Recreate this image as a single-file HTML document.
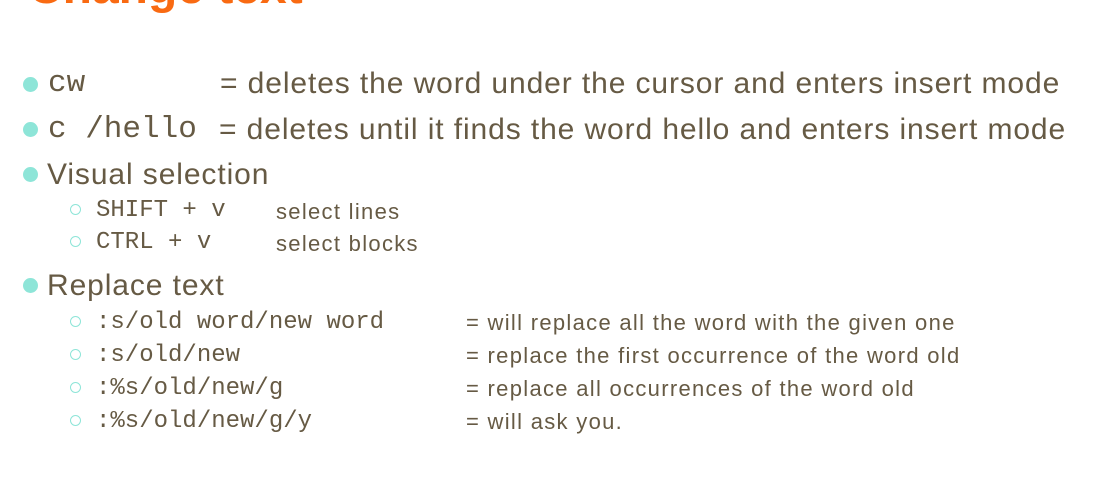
<!DOCTYPE html>
<html><head><meta charset="utf-8"><style>
body{margin:0;width:1097px;height:483px;background:#fff;overflow:hidden;position:relative;font-family:"Liberation Sans",sans-serif;color:#665a44}
div{position:absolute;line-height:1;white-space:pre}
.m{font-family:"Liberation Mono",monospace}
.b{width:15px;height:15px;border-radius:50%;background:#8ee5d8}
.c{width:9px;height:9px;border-radius:50%;border:1.5px solid #8ee5d8}
.t{font-size:30px;letter-spacing:0.9px}
.s{font-size:22px;letter-spacing:1.3px}
.ms{font-size:24px}
</style></head><body>
<div style="left:28px;top:-36px;font-size:48px;font-weight:bold;color:#f96a12">Change text</div>

<div class="b" style="left:23px;top:77px"></div>
<div class="m" style="left:48px;top:68px;font-size:31px">cw</div>
<div class="t" style="left:220px;top:69px">= deletes the word under the cursor and enters insert mode</div>

<div class="b" style="left:23px;top:122px"></div>
<div class="m" style="left:48px;top:114px;font-size:31px">c /hello</div>
<div class="t" style="left:219px;top:115px">= deletes until it finds the word hello and enters insert mode</div>

<div class="b" style="left:23px;top:167px"></div>
<div class="t" style="left:47px;top:160px">Visual selection</div>

<div class="c" style="left:70px;top:204px"></div>
<div class="m ms" style="left:96px;top:199px">SHIFT + v</div>
<div class="s" style="left:276px;top:201px">select lines</div>
<div class="c" style="left:70px;top:236px"></div>
<div class="m ms" style="left:96px;top:231px">CTRL + v</div>
<div class="s" style="left:276px;top:233px">select blocks</div>

<div class="b" style="left:23px;top:278px"></div>
<div class="t" style="left:47px;top:271px">Replace text</div>

<div class="c" style="left:70px;top:316px"></div>
<div class="m ms" style="left:96px;top:311px">:s/old word/new word</div>
<div class="s" style="left:466px;top:312px">= will replace all the word with the given one</div>
<div class="c" style="left:70px;top:349px"></div>
<div class="m ms" style="left:96px;top:344px">:s/old/new</div>
<div class="s" style="left:466px;top:345px">= replace the first occurrence of the word old</div>
<div class="c" style="left:70px;top:382px"></div>
<div class="m ms" style="left:96px;top:377px">:%s/old/new/g</div>
<div class="s" style="left:466px;top:378px">= replace all occurrences of the word old</div>
<div class="c" style="left:70px;top:415px"></div>
<div class="m ms" style="left:96px;top:410px">:%s/old/new/g/y</div>
<div class="s" style="left:466px;top:411px">= will ask you.</div>
</body></html>
